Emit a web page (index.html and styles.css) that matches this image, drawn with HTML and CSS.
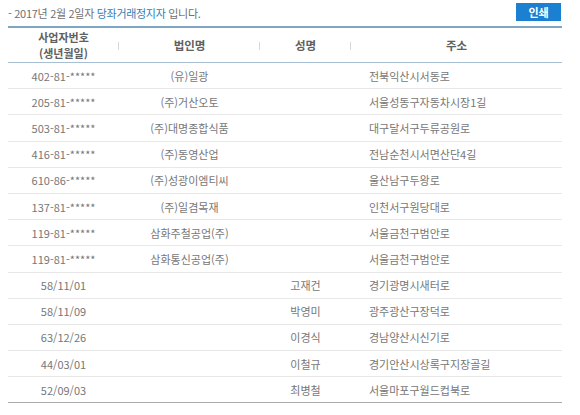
FILE: index.html
```html
<!DOCTYPE html>
<html lang="ko">
<head>
<meta charset="utf-8">
<link rel="stylesheet" href="styles.css">
</head>
<body>
<div class="wrap">
  <div class="top">
    <p class="intro">- 2017년 2월 2일자 <span class="hl">당좌거래정지자</span> 입니다.</p>
    <button class="print">인쇄</button>
  </div>
  <table class="list">
    <colgroup>
      <col class="c1"><col class="c2"><col class="c3"><col class="c4">
    </colgroup>
    <thead>
      <tr>
        <th class="sep"><span class="ln">사업자번호</span><span class="ln">(생년월일)</span></th>
        <th class="sep">법인명</th>
        <th class="sep">성명</th>
        <th>주소</th>
      </tr>
    </thead>
    <tbody>
      <tr><td>402-81-*****</td><td>(유)일광</td><td></td><td class="addr">전북익산시서동로</td></tr>
      <tr><td>205-81-*****</td><td>(주)거산오토</td><td></td><td class="addr">서울성동구자동차시장1길</td></tr>
      <tr><td>503-81-*****</td><td>(주)대명종합식품</td><td></td><td class="addr">대구달서구두류공원로</td></tr>
      <tr><td>416-81-*****</td><td>(주)동영산업</td><td></td><td class="addr">전남순천시서면산단4길</td></tr>
      <tr><td>610-86-*****</td><td>(주)성광이엠티씨</td><td></td><td class="addr">울산남구두왕로</td></tr>
      <tr><td>137-81-*****</td><td>(주)일겸목재</td><td></td><td class="addr">인천서구원당대로</td></tr>
      <tr><td>119-81-*****</td><td>삼화주철공업(주)</td><td></td><td class="addr">서울금천구범안로</td></tr>
      <tr><td>119-81-*****</td><td>삼화통신공업(주)</td><td></td><td class="addr">서울금천구범안로</td></tr>
      <tr><td>58/11/01</td><td></td><td>고재건</td><td class="addr">경기광명시새터로</td></tr>
      <tr><td>58/11/09</td><td></td><td>박영미</td><td class="addr">광주광산구장덕로</td></tr>
      <tr><td>63/12/26</td><td></td><td>이경식</td><td class="addr">경남양산시신기로</td></tr>
      <tr><td>44/03/01</td><td></td><td>이철규</td><td class="addr">경기안산시상록구지장골길</td></tr>
      <tr><td>52/09/03</td><td></td><td>최병철</td><td class="addr">서울마포구월드컵북로</td></tr>
    </tbody>
  </table>
</div>
</body>
</html>
```
FILE: styles.css
```css
html, body {
  margin: 0;
  padding: 0;
  background: #fff;
}
body {
  font-family: "Noto Sans CJK KR", "Noto Sans", sans-serif;
  color: #777;
}
.wrap {
  width: 554px;
  padding: 3px 0 0 8px;
}
.top {
  display: flex;
  justify-content: space-between;
  align-items: flex-end;
  height: 18px;
  margin-bottom: 5px;
}
.intro {
  margin: 0;
  font-size: 11px;
  line-height: 16px;
  color: #707070;
  letter-spacing: -0.3px;
}
.hl {
  color: #2f7fb5;
}
.print {
  width: 45px;
  height: 18px;
  margin: 0 1px 0 0;
  padding: 0;
  border: 0;
  background: #1b7fd2;
  color: #fff;
  font-family: "Noto Sans CJK KR", sans-serif;
  font-size: 11px;
  font-weight: bold;
  line-height: 18px;
}
.list {
  width: 554px;
  border-collapse: collapse;
  table-layout: fixed;
  border-top: 2px solid #7ea5c1;
  border-bottom: 1px solid #aaa;
}
.c1 { width: 111px; }
.c2 { width: 141px; }
.c3 { width: 91px; }
.c4 { width: 211px; }
th {
  position: relative;
  height: 34px;
  padding: 0;
  font-size: 11.5px;
  line-height: 16px;
  font-weight: bold;
  color: #606060;
  text-align: center;
  border-bottom: 1px solid #a7bfd2;
}
.ln {
  display: block;
  font-size: 11px;
  height: 16px;
  line-height: 16px;
}
th.sep::after {
  content: "";
  position: absolute;
  right: 0;
  top: 14px;
  width: 1px;
  height: 8px;
  background: #d6d6d6;
}
td {
  height: 25.2px;
  padding: 0;
  font-size: 11px;
  color: #777;
  text-align: center;
  border-bottom: 1px solid #e8e8e8;
}
td.addr {
  text-align: left;
  padding-left: 18px;
}
tbody tr:last-child td {
  border-bottom: 1px solid #aaa;
}
```
